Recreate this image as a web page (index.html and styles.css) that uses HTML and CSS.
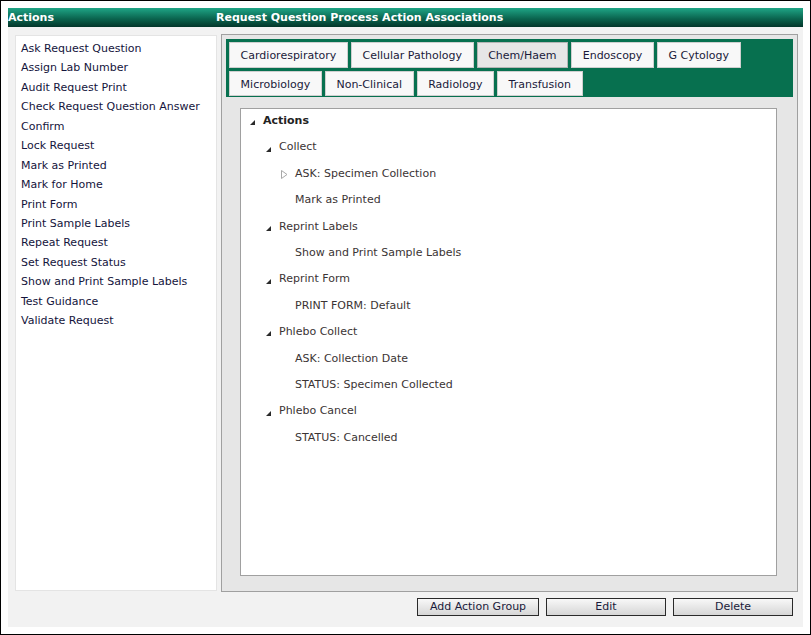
FILE: index.html
```html
<!DOCTYPE html>
<html>

<head>
  <link rel="stylesheet" href="styles.css">
</head>

<body>
  <div class="frame">
    <div class="window">
      <div class="titlebar">
        <div class="title-left">Actions</div>
        <div class="title-right">Request Question Process Action Associations</div>
      </div>

      <div class="panel">
        <div class="columns">
          <ul class="action-list">
            <li>Ask Request Question</li>
            <li>Assign Lab Number</li>
            <li>Audit Request Print</li>
            <li>Check Request Question Answer</li>
            <li>Confirm</li>
            <li>Lock Request</li>
            <li>Mark as Printed</li>
            <li>Mark for Home</li>
            <li>Print Form</li>
            <li>Print Sample Labels</li>
            <li>Repeat Request</li>
            <li>Set Request Status</li>
            <li>Show and Print Sample Labels</li>
            <li>Test Guidance</li>
            <li>Validate Request</li>
          </ul>

          <div class="assoc">
            <div class="tabs">
              <div class="tab-row">
                <div class="tab">Cardiorespiratory</div>
                <div class="tab">Cellular Pathology</div>
                <div class="tab active">Chem/Haem</div>
                <div class="tab">Endoscopy</div>
                <div class="tab">G Cytology</div>
              </div>
              <div class="tab-row">
                <div class="tab">Microbiology</div>
                <div class="tab">Non-Clinical</div>
                <div class="tab">Radiology</div>
                <div class="tab">Transfusion</div>
              </div>
            </div>

            <div class="tree-box">
              <ul class="tree">
                <li>
                  <div class="node open root"><span class="toggle"></span>Actions</div>
                  <ul>
                    <li>
                      <div class="node open"><span class="toggle"></span>Collect</div>
                      <ul>
                        <li>
                          <div class="node closed">
                            <span class="toggle"><svg width="7" height="9" viewBox="0 0 7 9"><polygon points="0.5,0.5 6,4.5 0.5,8.5" fill="#fff" stroke="#a8a8a8" /></svg></span>ASK: Specimen Collection
                          </div>
                        </li>
                        <li><div class="node"><span class="toggle"></span>Mark as Printed</div></li>
                      </ul>
                    </li>
                    <li>
                      <div class="node open"><span class="toggle"></span>Reprint Labels</div>
                      <ul>
                        <li><div class="node"><span class="toggle"></span>Show and Print Sample Labels</div></li>
                      </ul>
                    </li>
                    <li>
                      <div class="node open"><span class="toggle"></span>Reprint Form</div>
                      <ul>
                        <li><div class="node"><span class="toggle"></span>PRINT FORM: Default</div></li>
                      </ul>
                    </li>
                    <li>
                      <div class="node open"><span class="toggle"></span>Phlebo Collect</div>
                      <ul>
                        <li><div class="node"><span class="toggle"></span>ASK: Collection Date</div></li>
                        <li><div class="node"><span class="toggle"></span>STATUS: Specimen Collected</div></li>
                      </ul>
                    </li>
                    <li>
                      <div class="node open"><span class="toggle"></span>Phlebo Cancel</div>
                      <ul>
                        <li><div class="node"><span class="toggle"></span>STATUS: Cancelled</div></li>
                      </ul>
                    </li>
                  </ul>
                </li>
              </ul>
            </div>
          </div>
        </div>

        <div class="buttons">
          <button class="btn wide">Add Action Group</button>
          <button class="btn">Edit</button>
          <button class="btn">Delete</button>
        </div>
      </div>
    </div>
  </div>
</body>

</html>
```

FILE: styles.css
```css
* {
  box-sizing: border-box;
}

html,
body {
  margin: 0;
}

body {
  width: 811px;
  height: 635px;
  font-family: "DejaVu Sans", Verdana, sans-serif;
  font-size: 11px;
}

.frame {
  height: 635px;
  border: 1px solid #000;
  padding: 7px;
  background: #fff;
}

.window {
  display: flex;
  flex-direction: column;
  height: 100%;
}

.titlebar {
  display: flex;
  height: 19px;
  line-height: 19px;
  background: linear-gradient(#1fa586, #0b6650 55%, #03362a);
  color: #fff;
  font-weight: bold;
}

.title-left {
  width: 208px;
}

.panel {
  flex: 1;
  display: flex;
  flex-direction: column;
  background: #f2f2f2;
  padding: 7px 5px 0 7px;
}

.columns {
  display: flex;
  gap: 4px;
  height: 558px;
}

.action-list {
  width: 202px;
  margin: 1px 0;
  padding: 3px 5px;
  list-style: none;
  background: #fff;
  border: 1px solid #e4e4e4;
  color: #14143c;
  line-height: 19.43px;
}

.assoc {
  flex: 1;
  display: flex;
  flex-direction: column;
  background: #e6e6e6;
  border: 1px solid #a0a0a0;
  padding: 4px 4px 0 4px;
}

.tabs {
  display: flex;
  flex-direction: column;
  gap: 3px;
  background: #07704f;
  padding: 3px 3px 1px;
}

.tab-row {
  display: flex;
  gap: 3px;
}

.tab {
  height: 26px;
  padding: 1px 10.6px 0;
  line-height: 24px;
  border: 1px solid #cfcfcf;
  background: #f8f8f8;
  color: #1a1a3a;
}

.tab-row + .tab-row .tab {
  height: 25px;
  line-height: 23px;
}

.tab.active {
  background: #e6e6e6;
  border-color: #b5b5b5;
}

.tree-box {
  flex: 1;
  margin: 11px 16px 15px 14px;
  background: #fff;
  border: 1px solid #a0a0a0;
}

.tree,
.tree ul {
  list-style: none;
  margin: 0;
  padding: 0;
}

.tree {
  margin-top: -1px;
  padding-left: 6px;
  color: #3b3434;
  line-height: 26.4px;
}

.tree ul {
  padding-left: 16px;
}

.node {
  display: flex;
  align-items: center;
}

.node.root {
  font-weight: bold;
  color: #222;
}

.toggle {
  flex: 0 0 16px;
  height: 16px;
  position: relative;
}

.node.open .toggle::before {
  content: "";
  position: absolute;
  left: 3px;
  top: 7px;
  border-left: 5px solid transparent;
  border-bottom: 5px solid #2a2a2a;
}

.node.closed .toggle svg {
  position: absolute;
  left: 2px;
  top: 4px;
}

.buttons {
  display: flex;
  justify-content: flex-end;
  gap: 7px;
  margin-top: 6px;
  padding-right: 5px;
}

.btn {
  width: 120px;
  height: 18px;
  padding: 0;
  border: 1px solid #2a2a2a;
  background: linear-gradient(#f8f8f8, #d6d6d6);
  font: inherit;
  color: #1a1a3a;
  line-height: 16px;
}

.btn.wide {
  width: 122px;
}
```
